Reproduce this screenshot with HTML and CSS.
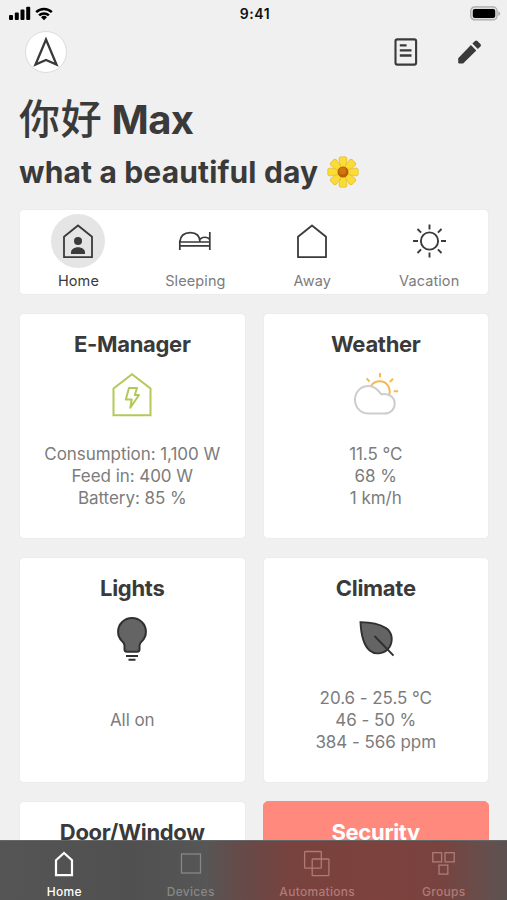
FILE: index.html
```html
<!DOCTYPE html>
<html lang="en">
  <head>
    <meta charset="UTF-8" />
    <meta name="viewport" content="width=device-width, initial-scale=1.0" />
    <title>Home</title>
    <link rel="stylesheet" href="styles.css">
  </head>
  <body>
    <div class="screen">
      <div class="status-bar">
        <div class="signal">
          <svg width="22" height="15" viewBox="0 0 22 15">
            <rect x="0" y="9" width="4" height="5" rx="1" />
            <rect x="5.8" y="6.5" width="4" height="7.5" rx="1" />
            <rect x="11.5" y="3.5" width="4" height="10.5" rx="1" />
            <rect x="17.2" y="0.8" width="4" height="13.2" rx="1" />
          </svg>
          <svg width="18" height="14" viewBox="0 0 18 14">
            <path d="M1.2 5.2a11 11 0 0 1 15.6 0M4.1 8.4a7 7 0 0 1 9.8 0" fill="none" stroke="#000" stroke-width="2.5" />
            <path d="M9 13.2L6 10.3a4.3 4.3 0 0 1 6 0z" />
          </svg>
        </div>
        <span class="time">9:41</span>
        <svg class="battery" width="31" height="15" viewBox="0 0 31 15">
          <rect x="0.7" y="0.9" width="26.4" height="13" rx="4" fill="#ddd" stroke="#a9a9a9" stroke-width="1.2" />
          <rect x="2.8" y="2.9" width="22.4" height="9" rx="2" />
          <path d="M28.4 5.2c2.3.8 2.3 3.9 0 4.7z" fill="#a9a9a9" />
        </svg>
      </div>

      <header class="top-bar">
        <div class="avatar">
          <svg width="40" height="40" viewBox="1 1 40 40">
            <path d="M21 8.5L31.5 33.5L21 29L10.5 33.5Z" fill="none" stroke="#3a3a3a" stroke-width="2.3" />
          </svg>
        </div>
        <div class="actions">
          <svg width="24" height="28" viewBox="0 0 24 28" fill="none" stroke="#3a3a3a" stroke-width="2.1">
            <rect x="1.5" y="1.4" width="20.6" height="25.2" rx="1.8" />
            <path d="M5.8 7.4h6.8M5.8 12.4h11.7M5.8 17.5h11.7" stroke-width="2.3" />
          </svg>
          <svg width="24" height="24" viewBox="0.5 0 24 24" fill="#3a3a3a">
            <path d="M.7 18.2L13.4 5.1l5.4 5.4L5.6 23.4H1.7q-1 0-1-1z" />
            <path d="M14.9 3.6L17.5 1q1.2-1.1 2.4 0l3 3q1.1 1.2 0 2.4l-2.6 2.6z" />
          </svg>
        </div>
      </header>

      <div class="greeting">
        <h1><span class="hello">你好</span> Max</h1>
        <h2>
          <span>what a beautiful day</span>
          <svg width="32" height="34" viewBox="-16 -17 32 34">
            <g fill="#fbdc35" stroke="#dfae28" stroke-width="0.6">
              <path id="petal" d="M-2.4-4L-4-12.8q0-2.6 2.2-2.6l1.8.4 1.8-.4q2.2 0 2.2 2.6L2.4-4z" />
              <use href="#petal" transform="rotate(45)" />
              <use href="#petal" transform="rotate(90)" />
              <use href="#petal" transform="rotate(135)" />
              <use href="#petal" transform="rotate(180)" />
              <use href="#petal" transform="rotate(225)" />
              <use href="#petal" transform="rotate(270)" />
              <use href="#petal" transform="rotate(315)" />
            </g>
            <circle r="5.5" fill="#b95f05" />
            <circle cx="-.4" cy="-1" r="3.6" fill="#d1760c" />
          </svg>
        </h2>
      </div>

      <div class="modes">
        <div class="mode active">
          <div class="mode-icon">
            <svg width="32" height="36" viewBox="0 0 32 36">
              <path d="M2 13.8L16 2.5l14 11.3v20.4H2z" fill="none" stroke="#3a3a3a" stroke-width="1.8" />
              <circle cx="16" cy="18" r="4" fill="#3a3a3a" />
              <path d="M9 31v-1.6c0-3 3.2-5.2 7-5.2s7 2.2 7 5.2V31z" fill="#3a3a3a" />
            </svg>
          </div>
          <span>Home</span>
        </div>
        <div class="mode">
          <div class="mode-icon">
            <svg width="34" height="20" viewBox="0 0 34 20" fill="none" stroke="#3a3a3a" stroke-width="1.7">
              <path d="M1.8 19V9.5M1.8 11h30M1.8 14.8h30M31.8 1v18" />
              <path d="M1.8 11C2.3 4.2 6.5 1.6 12.4 1.6c5.5 0 9.4 3 9.7 9.4M22.1 8.4c1.5-2.8 7.8-2.9 9.5 0" />
            </svg>
          </div>
          <span>Sleeping</span>
        </div>
        <div class="mode">
          <div class="mode-icon">
            <svg width="32" height="36" viewBox="0 0 32 36">
              <path d="M2 13.8L16 2.5l14 11.3v20.4H2z" fill="none" stroke="#3a3a3a" stroke-width="1.8" stroke-linejoin="round" />
            </svg>
          </div>
          <span>Away</span>
        </div>
        <div class="mode">
          <div class="mode-icon">
            <svg width="34" height="34" viewBox="-17.5 -17 34 34" fill="none" stroke="#3a3a3a" stroke-width="1.9">
              <circle r="8.6" />
              <path d="M0-16.5v5M0 11.5v5M-16.5 0h5M11.5 0h5M-12-12l3.6 3.6M8.4 8.4L12 12M-12 12l3.6-3.6M8.4-8.4L12-12" />
            </svg>
          </div>
          <span>Vacation</span>
        </div>
      </div>

      <div class="cards">
        <div class="card">
          <h3>E-Manager</h3>
          <div class="card-icon">
            <svg width="40" height="46" viewBox="0 0 40 46" fill="none" stroke="#b3c957" stroke-width="2">
              <path d="M1.5 16.5L20 2.3l18.5 14.2v26.8h-37z" />
              <path d="M17 16h8l-2.2 7H27L18.3 35.8l1.4-8.3h-5.9z" stroke-linejoin="round" />
            </svg>
          </div>
          <div class="values">
            <p>Consumption: 1,100 W</p>
            <p>Feed in: 400 W</p>
            <p>Battery: 85 %</p>
          </div>
        </div>
        <div class="card">
          <h3>Weather</h3>
          <div class="card-icon">
            <svg width="46" height="46" viewBox="0 0 46 46" fill="none">
              <path d="M18 14C21.5 8.5 30 7.3 34.5 13c2.2 3 2.6 6 2 9.3" stroke="#f8b84e" stroke-width="2" />
              <path d="M27 1v4.2M13.6 6.4l3 3.3M40 6.8l-3.2 3.2M40.6 19.2h4.5" stroke="#f8b84e" stroke-width="2" />
              <path d="M14.8 41.5C7 41.3 2 34.8 2 27.8c0-8 6-13.8 13.5-13.8 5.8 0 9.5 3.5 12.8 8.3 8.1-1.5 13.4 3.2 13.4 9.3 0 5.7-4.2 9.9-10.2 9.9z" stroke="#cdcdcd" stroke-width="2" />
            </svg>
          </div>
          <div class="values">
            <p>11.5 °C</p>
            <p>68 %</p>
            <p>1 km/h</p>
          </div>
        </div>
        <div class="card">
          <h3>Lights</h3>
          <div class="card-icon">
            <svg width="32" height="46" viewBox="0 0 32 46" stroke="#303030" stroke-width="2">
              <path d="M8.5 33.2v-3.7c0-2-1-3-2.5-4.4C3.5 22.7 2.1 19.5 2.1 15.8 2.1 8.2 8.3 2 16 2s13.9 6.2 13.9 13.8c0 3.7-1.4 6.9-3.9 9.3-1.5 1.4-2.5 2.4-2.5 4.4v3.7c0 1.5-1 2.5-2.5 2.5H11c-1.5 0-2.5-1-2.5-2.5z" fill="#646464" />
              <path d="M10 40h12M12.5 43.8h7" />
            </svg>
          </div>
          <div class="values">
            <p>All on</p>
          </div>
        </div>
        <div class="card">
          <h3>Climate</h3>
          <div class="card-icon">
            <svg width="36" height="36" viewBox="-1 0.5 36 36" stroke="#303030" stroke-width="1.9">
              <path d="M1.5 1.6C11 1.7 20.5 3.5 27 7.6c6.2 4.3 7.4 12.4 3.5 18.9-4.3 6.8-14 8.5-19.8 3.5C4.5 24.5 2 13.5 1.5 1.6z" fill="#646464" />
              <path d="M15.5 15.5L34.5 35" />
            </svg>
          </div>
          <div class="values">
            <p>20.6 - 25.5 °C</p>
            <p>46 - 50 %</p>
            <p>384 - 566 ppm</p>
          </div>
        </div>
        <div class="card">
          <h3>Door/Window</h3>
        </div>
        <div class="card alert">
          <h3>Security</h3>
        </div>
      </div>

      <nav class="tab-bar">
        <div class="tab active">
          <svg width="28" height="28" viewBox="0 0 28 28" fill="none" stroke="#fff" stroke-width="2.2">
            <path d="M6 10.3L14 2.9l8 7.4v14.9H6z" />
          </svg>
          <span>Home</span>
        </div>
        <div class="tab">
          <svg width="28" height="28" viewBox="0 0 28 28" fill="none" stroke="#878787" stroke-width="1.3">
            <rect x="4.5" y="4" width="19" height="19" />
          </svg>
          <span>Devices</span>
        </div>
        <div class="tab warm">
          <svg width="28" height="28" viewBox="0 0 28 28" fill="none" stroke="#b07b76" stroke-width="1.3">
            <rect x="1.6" y="1.5" width="16.7" height="16.7" rx=".7" />
            <rect x="9.2" y="9" width="16.7" height="16.7" rx=".7" />
          </svg>
          <span>Automations</span>
        </div>
        <div class="tab warm">
          <svg width="28" height="28" viewBox="0 0 28 28" fill="none" stroke="#b07b76" stroke-width="1.3">
            <rect x="2.8" y="2.7" width="8.8" height="9.2" />
            <rect x="15" y="2.7" width="9.2" height="9.2" />
            <rect x="9" y="15.1" width="8.8" height="9" />
          </svg>
          <span>Groups</span>
        </div>
      </nav>
    </div>
  </body>
</html>
```

FILE: styles.css
```css
* {
  box-sizing: border-box;
  margin: 0;
}
body {
  font-family: Inter, "Noto Sans CJK SC", sans-serif;
  background-color: #f0f0f0;
  color: #3a3a3a;
}
svg {
  display: block;
  flex-shrink: 0;
}
.screen {
  position: relative;
  height: 900px;
  overflow: hidden;
  padding: 0 18px 0 19px;
}
.status-bar {
  display: grid;
  grid-template-columns: 1fr auto 1fr;
  align-items: center;
  height: 27px;
  margin: 0 -12px 0 -11px;
  padding-left: 1px;
}
.signal {
  display: flex;
  align-items: center;
  gap: 4px;
}
.time {
  font-size: 14px;
  font-weight: 600;
  color: #111;
  letter-spacing: 0.6px;
}
.battery {
  justify-self: end;
}
.top-bar {
  display: flex;
  justify-content: space-between;
  align-items: center;
  height: 50px;
  padding: 0 7px 0 6px;
}
.avatar {
  width: 42px;
  height: 42px;
  border: 1px solid #dcdcdc;
  border-radius: 50%;
  background-color: #fff;
}
.actions {
  display: flex;
  align-items: center;
  gap: 40px;
}
.greeting {
  height: 132px;
  padding-top: 18px;
}
h1 {
  font-size: 40px;
  font-weight: 700;
  line-height: 50px;
  letter-spacing: -0.6px;
}
.hello {
  font-size: 41px;
  font-weight: 500;
  line-height: 1;
  letter-spacing: 0.8px;
}
h2 {
  display: flex;
  align-items: center;
  gap: 9px;
  font-size: 30px;
  font-weight: 700;
  line-height: 36px;
  letter-spacing: 0.15px;
  padding-top: 9px;
}
.modes {
  display: flex;
  height: 86px;
  padding-right: 0.4px;
  background-color: #fff;
  border: 1px solid #ececec;
  border-radius: 5px;
}
.mode {
  flex: 1;
  display: flex;
  flex-direction: column;
  align-items: center;
  padding-top: 4px;
  font-size: 14.5px;
  line-height: 18px;
  letter-spacing: 0.1px;
  color: #7c7c7c;
}
.mode-icon {
  display: flex;
  align-items: center;
  justify-content: center;
  width: 54px;
  height: 54px;
  margin-bottom: 4px;
  border-radius: 50%;
}
.mode.active {
  color: #3a3a3a;
}
.mode.active .mode-icon {
  background-color: #e5e5e5;
}
.cards {
  display: grid;
  grid-template-columns: 1fr 1fr;
  grid-auto-rows: 226px;
  gap: 18px 17px;
  margin-top: 18px;
}
.card {
  display: flex;
  flex-direction: column;
  align-items: center;
  padding-top: 16px;
  background-color: #fff;
  border: 1px solid #ececec;
  border-radius: 5px;
}
h3 {
  font-size: 22px;
  font-weight: 700;
  line-height: 28px;
  letter-spacing: -0.3px;
}
.card-icon {
  display: flex;
  align-items: center;
  height: 46px;
  margin-top: 14px;
}
.values {
  display: flex;
  flex-direction: column;
  justify-content: center;
  height: 66px;
  margin-top: 25px;
  text-align: center;
  font-size: 17px;
  line-height: 22px;
  letter-spacing: -0.05px;
  color: #7c7c7c;
}
.card.alert {
  background-color: #ff897c;
  border-color: #ff897c;
  color: #fff;
}
.tab-bar {
  position: absolute;
  left: 0;
  right: 0;
  bottom: 0;
  display: flex;
  height: 60px;
  padding: 9px 0 0 1px;
  border-top: 1px solid #666;
  background: linear-gradient(90deg, #555 0, #505050 130px, #575656 205px, #654b49 240px, #78423e 290px, #7d423d 380px, #78433f 440px, #64504e 490px, #5b5150 507px);
}
.tab {
  flex: 1;
  display: flex;
  flex-direction: column;
  align-items: center;
  gap: 6px;
  font-size: 12px;
  font-weight: 500;
  line-height: 15px;
  letter-spacing: 0.3px;
  color: #878787;
}
.tab.active {
  color: #fff;
}
.tab.warm {
  color: #b07b76;
}
```
